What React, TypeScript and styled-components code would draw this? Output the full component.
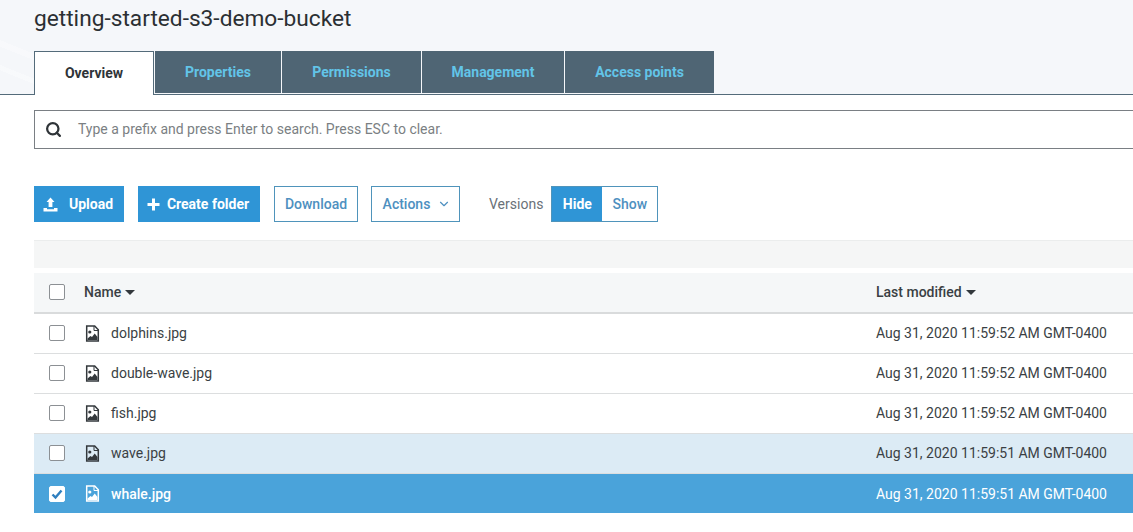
import styled, { createGlobalStyle } from "styled-components";
import { ChevronDown, Search } from "lucide-react";

const GlobalStyle = createGlobalStyle`
  html, body {
    margin: 0;
    padding: 0;
    width: 1133px;
    height: 532px;
    overflow: hidden;
    background: #fff;
    font-family: Roboto, "Liberation Sans", sans-serif;
  }
`;

const Page = styled.div`
  width: 1133px;
  height: 532px;
  overflow: hidden;
`;

const Header = styled.header`
  height: 94px;
  box-sizing: content-box;
  border-bottom: 1px solid #546b7a;
  background:
    linear-gradient(22deg, transparent 0 22px, rgba(255, 255, 255, 0.35) 22px 27px, transparent 27px 44px, rgba(255, 255, 255, 0.3) 44px 50px, transparent 50px) 0 0 / 90px 94px no-repeat,
    #f5f7fa;
  padding-left: 34px;
`;

const Title = styled.h1`
  margin: 0;
  height: 51px;
  padding-top: 5px;
  box-sizing: border-box;
  font-size: 22.7px;
  line-height: 28px;
  font-weight: 400;
  color: #2b2f33;
`;

const Tabs = styled.nav`
  display: flex;
  align-items: flex-start;
  gap: 1px;
  height: 43px;
`;

const Tab = styled.div<{ $active?: boolean; $width: number }>`
  width: ${(p) => p.$width}px;
  flex: none;
  box-sizing: border-box;
  display: flex;
  align-items: center;
  justify-content: center;
  font-size: 14px;
  font-weight: 700;
  ${(p) =>
    p.$active
      ? `
    height: 44px;
    background: #fff;
    color: #2f3438;
    border: 1px solid #546b7a;
    border-bottom: none;
    padding-bottom: 1px;
    position: relative;
  `
      : `
    height: 42px;
    padding-bottom: 1px;
    background: #4f6574;
    color: #62c4e8;
  `}
`;

const Content = styled.main`
  padding-left: 34px;
  width: 1200px;
  box-sizing: border-box;
`;

const SearchBox = styled.div`
  margin-top: 15px;
  height: 39px;
  box-sizing: border-box;
  border: 1px solid #7a7f84;
  display: flex;
  align-items: center;
  padding-left: 10px;
  gap: 16px;
  color: #2f3438;
`;

const SearchText = styled.span`
  font-size: 14px;
  line-height: 16px;
  padding-bottom: 2px;
  color: #7b7f83;
`;

const Toolbar = styled.div`
  margin-top: 37px;
  display: flex;
  align-items: center;
  height: 36px;
`;

const Button = styled.div<{ $primary?: boolean; $width: number; $gap?: number }>`
  width: ${(p) => p.$width}px;
  height: 36px;
  margin-right: ${(p) => p.$gap ?? 0}px;
  box-sizing: border-box;
  display: flex;
  align-items: center;
  justify-content: center;
  padding-right: ${(p) => (p.$primary ? 2 : 0)}px;
  font-size: 14px;
  font-weight: ${(p) => (p.$primary ? 700 : 500)};
  color: ${(p) => (p.$primary ? "#fff" : "#4e90c0")};
  background: ${(p) => (p.$primary ? "#2f95d6" : "#fff")};
  border: ${(p) => (p.$primary ? "none" : "1px solid #4f94bb")};
`;

const ActionsLabel = styled.span`
  margin-left: 3px;
`;

const VersionsLabel = styled.span`
  margin-left: 29px;
  margin-right: 8px;
  font-size: 14px;
  color: #6a7178;
`;

const Toggle = styled.div`
  display: flex;
  width: 107px;
  height: 36px;
  box-sizing: border-box;
  border: 1px solid #4f94bb;
`;

const ToggleItem = styled.div<{ $on?: boolean }>`
  flex: ${(p) => (p.$on ? "0 0 50px" : "1")};
  display: flex;
  align-items: center;
  justify-content: center;
  font-size: 14px;
  font-weight: ${(p) => (p.$on ? 700 : 500)};
  color: ${(p) => (p.$on ? "#fff" : "#4e90c0")};
  background: ${(p) => (p.$on ? "#2f95d6" : "#fff")};
`;

const Band = styled.div`
  margin-top: 18px;
  height: 28px;
  box-sizing: border-box;
  background: #f5f6f6;
  border-top: 1px solid #ebeded;
`;

const Table = styled.div`
  margin-top: 5px;
`;

const Row = styled.div<{ $kind?: "head" | "hover" | "selected" }>`
  display: grid;
  grid-template-columns: 50px 792px 1fr;
  align-items: center;
  box-sizing: border-box;
  padding-bottom: ${(p) => (p.$kind === "selected" ? 0 : 1)}px;
  font-size: 14px;
  color: ${(p) => (p.$kind === "selected" ? "#fff" : "#3a3f44")};
  background: ${(p) =>
    p.$kind === "selected"
      ? "#4aa3da"
      : p.$kind === "hover"
        ? "#dcebf5"
        : p.$kind === "head"
          ? "#f5f7f8"
          : "#fff"};
  border-bottom: ${(p) =>
    p.$kind === "head"
      ? "2px solid #d9dbdc"
      : p.$kind === "selected"
        ? "none"
        : "1px solid #dcdedf"};
  height: ${(p) => (p.$kind === "head" ? 41 : p.$kind === "selected" ? 39 : 40)}px;
`;

const CheckCell = styled.div`
  display: flex;
  justify-content: center;
  width: 46px;
`;

const CheckBox = styled.span<{ $checked?: boolean }>`
  width: 16px;
  height: 16px;
  box-sizing: border-box;
  background: #fff;
  border: 1px solid ${(p) => (p.$checked ? "#fff" : "#8c9094")};
  border-radius: 2px;
  display: flex;
  align-items: center;
  justify-content: center;
`;

const NameCell = styled.div<{ $selected?: boolean }>`
  display: flex;
  align-items: center;
  gap: 10px;
  font-weight: ${(p) => (p.$selected ? 500 : 400)};
`;

const HeadLabel = styled.div`
  display: flex;
  align-items: center;
  gap: 4px;
  font-weight: 500;
`;

const Caret = styled.span`
  width: 0;
  height: 0;
  border-left: 5px solid transparent;
  border-right: 5px solid transparent;
  border-top: 5px solid #33383c;
`;

const UploadIcon = () => (
  <svg width="15" height="15" viewBox="0 0 15 15" fill="#fff" style={{ marginRight: 11 }}>
    <path d="M7.5 0.5l4 4.5H9.4v5H5.6V5H3.5z" />
    <path d="M0.5 11h3.5v1.2h7V11h3.5v3.5H0.5z" />
  </svg>
);

const PlusIcon = () => (
  <svg width="13" height="13" viewBox="0 0 13 13" fill="#fff" style={{ marginRight: 7 }}>
    <path d="M5 0.5h3V5h4.5v3H8v4.5H5V8H0.5V5H5z" />
  </svg>
);

const FileIcon = ({ color }: { color: string }) => (
  <svg width="17" height="17" viewBox="0 0 17 17" fill="none">
    <path d="M2.7 1h8l3.6 3.8v11.2H2.7z" stroke={color} strokeWidth="1.5" />
    <path d="M10 1v4.5h4.5" stroke={color} strokeWidth="1" />
    <circle cx="5.8" cy="7" r="1.6" fill={color} />
    <path d="M3.5 15v-1.5l3-2.5 1.5 1 2.7-3.5 2.8 3.6V15z" fill={color} />
  </svg>
);

const files = [
  { name: "dolphins.jpg", date: "Aug 31, 2020 11:59:52 AM GMT-0400" },
  { name: "double-wave.jpg", date: "Aug 31, 2020 11:59:52 AM GMT-0400" },
  { name: "fish.jpg", date: "Aug 31, 2020 11:59:52 AM GMT-0400" },
  { name: "wave.jpg", date: "Aug 31, 2020 11:59:51 AM GMT-0400", kind: "hover" as const },
  { name: "whale.jpg", date: "Aug 31, 2020 11:59:51 AM GMT-0400", kind: "selected" as const },
];

const tabs = [
  { label: "Overview", width: 120, active: true },
  { label: "Properties", width: 126 },
  { label: "Permissions", width: 139 },
  { label: "Management", width: 142 },
  { label: "Access points", width: 149 },
];

export default function App() {
  return (
    <Page>
      <GlobalStyle />
      <Header>
        <Title>getting-started-s3-demo-bucket</Title>
        <Tabs>
          {tabs.map((t) => (
            <Tab key={t.label} $active={t.active} $width={t.width}>
              {t.label}
            </Tab>
          ))}
        </Tabs>
      </Header>
      <Content>
        <SearchBox>
          <Search size={17} strokeWidth={3.2} />
          <SearchText>Type a prefix and press Enter to search. Press ESC to clear.</SearchText>
        </SearchBox>
        <Toolbar>
          <Button $primary $width={90} $gap={14}>
            <UploadIcon />
            Upload
          </Button>
          <Button $primary $width={122} $gap={14}>
            <PlusIcon />
            Create folder
          </Button>
          <Button $width={84} $gap={13}>
            Download
          </Button>
          <Button $width={89}>
            <ActionsLabel>Actions</ActionsLabel>
            <ChevronDown size={14} style={{ marginLeft: 7 }} />
          </Button>
          <VersionsLabel>Versions</VersionsLabel>
          <Toggle>
            <ToggleItem $on>Hide</ToggleItem>
            <ToggleItem>Show</ToggleItem>
          </Toggle>
        </Toolbar>
        <Band />
        <Table>
          <Row $kind="head">
            <CheckCell>
              <CheckBox />
            </CheckCell>
            <HeadLabel>
              Name <Caret />
            </HeadLabel>
            <HeadLabel>
              Last modified <Caret />
            </HeadLabel>
          </Row>
          {files.map((f) => (
            <Row key={f.name} $kind={f.kind}>
              <CheckCell>
                <CheckBox $checked={f.kind === "selected"}>
                  {f.kind === "selected" && (
                    <svg width="12" height="12" viewBox="0 0 12 12" fill="none">
                      <path d="M1.5 6.5l3 3 6-7" stroke="#2f7fbf" strokeWidth="2.4" />
                    </svg>
                  )}
                </CheckBox>
              </CheckCell>
              <NameCell $selected={f.kind === "selected"}>
                <FileIcon color={f.kind === "selected" ? "#fff" : "#33383c"} />
                {f.name}
              </NameCell>
              <div>{f.date}</div>
            </Row>
          ))}
        </Table>
      </Content>
    </Page>
  );
}
